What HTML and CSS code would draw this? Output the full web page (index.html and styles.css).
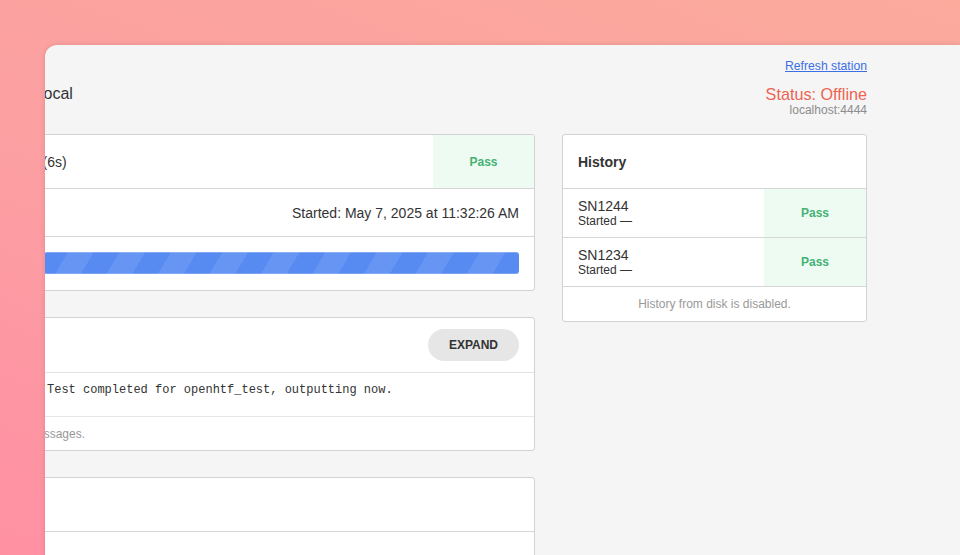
FILE: index.html
```html
<!DOCTYPE html>
<html>
<head>
<meta charset="utf-8">
<link rel="stylesheet" href="styles.css">
</head>
<body>
<div class="window">
  <div class="content">
    <div class="topbar"><a class="refresh" href="#">Refresh station</a></div>
    <div class="header">
      <div class="title">local</div>
      <div class="status-block">
        <div class="status">Status: Offline</div>
        <div class="host">localhost:4444</div>
      </div>
    </div>
    <div class="columns">
      <div class="left">
        <section class="card">
          <div class="card-head"><span class="head-text">(6s)</span><div class="pass-cell">Pass</div></div>
          <div class="row-started">Started: May 7, 2025 at 11:32:26 AM</div>
          <div class="row-progress"><div class="bar"></div></div>
        </section>
        <section class="card">
          <div class="card-head log-head"><button class="expand">EXPAND</button></div>
          <div class="log-line">Test completed for openhtf_test, outputting now.</div>
          <div class="log-footer">messages.</div>
        </section>
        <section class="card">
          <div class="card-head"></div>
          <div class="phase-row"></div>
        </section>
      </div>
      <div class="right">
        <section class="card">
          <div class="card-head"><span class="history-title">History</span></div>
          <div class="hist-row">
            <div class="hist-info"><div class="sn">SN1244</div><div class="started">Started —</div></div>
            <div class="pass-cell">Pass</div>
          </div>
          <div class="hist-row">
            <div class="hist-info"><div class="sn">SN1234</div><div class="started">Started —</div></div>
            <div class="pass-cell">Pass</div>
          </div>
          <div class="hist-footer">History from disk is disabled.</div>
        </section>
      </div>
    </div>
  </div>
</div>
</body>
</html>
```

FILE: styles.css
```css
html, body {
  margin: 0;
  padding: 0;
}
body {
  width: 960px;
  height: 555px;
  overflow: hidden;
  background: linear-gradient(20deg, #ff90a3 0%, #fc9fa2 45%, #fbaa9c 100%);
  font-family: "Liberation Sans", Arial, sans-serif;
  color: #333;
}
.window {
  margin: 45px 0 0 45px;
  width: 915px;
  height: 540px;
  box-sizing: border-box;
  padding: 14px 93px 0 0;
  background: #f5f5f5;
  border-top-left-radius: 12px;
  overflow: hidden;
  box-shadow: 0 0 5px rgba(0, 0, 0, 0.12);
}
.content {
  margin-left: -17px;
}
.topbar {
  display: flex;
  justify-content: flex-end;
  line-height: 14px;
}
.refresh {
  font-size: 12.2px;
  color: #3b6fe6;
  text-decoration: underline;
}
.header {
  margin-top: 12px;
  display: flex;
  justify-content: space-between;
  align-items: flex-start;
}
.title {
  padding-left: 12px;
  font-size: 16px;
  line-height: 18px;
  color: #333;
}
.status-block {
  text-align: right;
}
.status {
  font-size: 16.2px;
  line-height: 18px;
  color: #ec6352;
}
.host {
  font-size: 12px;
  line-height: 14px;
  color: #8c8c8c;
}
.columns {
  margin-top: 17px;
  display: grid;
  grid-template-columns: 507px 305px;
  column-gap: 27px;
  align-items: start;
}
.left {
  display: flex;
  flex-direction: column;
  gap: 26px;
}
.card {
  background: #fff;
  border: 1px solid #d2d2d2;
  border-radius: 3px;
  overflow: hidden;
}
.card-head {
  display: flex;
  align-items: center;
  height: 53px;
  padding-left: 15px;
  border-bottom: 1px solid #d6d6d6;
}
.head-text {
  margin-left: -1.5px;
  font-size: 14px;
}
.pass-cell {
  margin-left: auto;
  align-self: stretch;
  width: 101px;
  display: flex;
  align-items: center;
  justify-content: center;
  background: #eefbf3;
  color: #45b175;
  font-weight: bold;
  font-size: 12px;
}
.row-started {
  height: 47px;
  display: flex;
  align-items: center;
  justify-content: flex-end;
  padding-right: 15px;
  font-size: 14px;
  border-bottom: 1px solid #d6d6d6;
}
.row-progress {
  height: 53px;
  box-sizing: border-box;
  padding: 15px 15px 0 15px;
}
.bar {
  height: 22px;
  border-radius: 3px;
  background-color: #578bf2;
  background-image: repeating-linear-gradient(120.6deg, rgba(255,255,255,0) 0 20.7px, rgba(255,255,255,0.09) 20.7px 42.85px, rgba(255,255,255,0) 42.85px 44.3px);
  box-shadow: inset 0 1px 0 rgba(255,255,255,0.25), inset 0 -1px 0 rgba(255,255,255,0.2);
}
.log-head {
  height: 54px;
  justify-content: flex-end;
  padding-right: 15px;
  border-bottom-color: #e2e2e2;
}
.expand {
  height: 32px;
  padding: 0 21px;
  border: none;
  border-radius: 16px;
  background: #e6e6e6;
  color: #333;
  font-family: "Liberation Sans", Arial, sans-serif;
  font-weight: bold;
  font-size: 12px;
}
.log-line {
  padding: 10px 15px 19px 18px;
  font-family: "Liberation Mono", "Courier New", monospace;
  font-size: 12px;
  line-height: 14px;
  border-bottom: 1px solid #e6e6e6;
  white-space: nowrap;
}
.log-footer {
  height: 33px;
  display: flex;
  align-items: center;
  padding-left: 15px;
  text-indent: -17px;
  font-size: 12px;
  color: #999;
}
.phase-row {
  height: 60px;
}
.history-title {
  font-weight: bold;
  font-size: 14px;
}
.hist-row {
  display: flex;
  height: 48px;
  border-bottom: 1px solid #d6d6d6;
}
.hist-info {
  padding: 9px 0 0 15px;
}
.hist-row .pass-cell {
  width: 102px;
}
.sn {
  font-size: 14px;
  line-height: 16px;
}
.started {
  font-size: 12px;
  line-height: 14px;
}
.hist-footer {
  height: 34px;
  display: flex;
  align-items: center;
  justify-content: center;
  font-size: 12px;
  color: #999;
}
```
